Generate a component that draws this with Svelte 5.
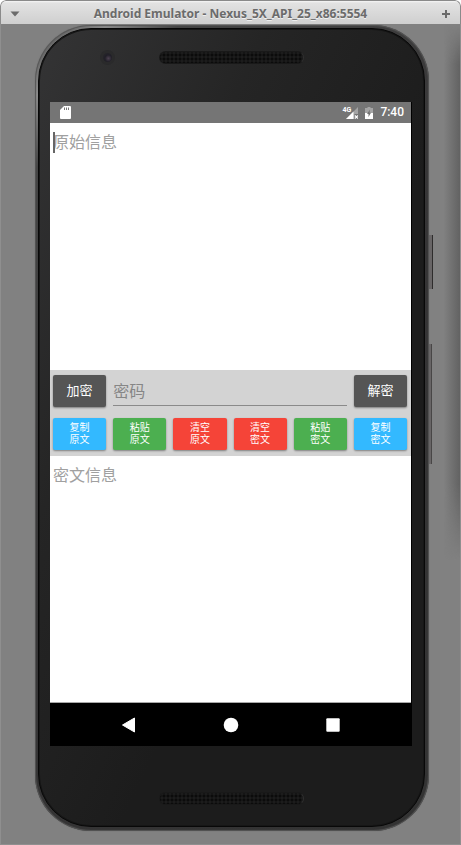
<script>
  let plain = $state('');
  let cipher = $state('');
  let password = $state('');

  const actions = [
    { verb: '复制', noun: '原文', tone: 'blue' },
    { verb: '粘贴', noun: '原文', tone: 'green' },
    { verb: '清空', noun: '原文', tone: 'red' },
    { verb: '清空', noun: '密文', tone: 'red' },
    { verb: '粘贴', noun: '密文', tone: 'green' },
    { verb: '复制', noun: '密文', tone: 'blue' }
  ];
</script>

<div class="window">
  <header class="titlebar">
    <button class="tool" aria-label="Window menu">
      <svg width="10" height="6" viewBox="0 0 10 6"><path d="M0.5 0.5h9L5 5.5z" fill="#6b6b6b" /></svg>
    </button>
    <h1>Android Emulator - Nexus_5X_API_25_x86:5554</h1>
    <button class="tool" aria-label="Maximize">
      <svg width="10" height="10" viewBox="0 0 10 10"><path d="M4 1h2v3h3v2H6v3H4V6H1V4h3z" fill="#6b6b6b" /></svg>
    </button>
  </header>

  <div class="stage">
    <div class="side power"></div>
    <div class="side volume"></div>
    <div class="phone">
      <div class="face">
        <div class="bezel top">
          <span class="camera"></span>
          <span class="speaker"></span>
        </div>

        <main class="screen">
          <div class="status">
            <svg class="sd" width="11" height="13" viewBox="0 0 11 13">
              <path d="M4 0h6q1 0 1 1v11q0 1-1 1H1q-1 0-1-1V4z" fill="#fff" />
              <path d="M4 1.5h1v2.5H4zM6 1.5h1v2.5H6zM8 1.5h1v2.5H8z" fill="#777" />
            </svg>
            <span class="signal">
              <span class="net">4G</span>
              <svg width="12" height="12" viewBox="0 0 12 12">
                <path d="M12 0v7H8.500v5H0z" fill="#a4a4a4" />
                <path d="M7.500 4.500V12H0z" fill="#fff" />
                <path d="M9 8.500l3 3M12 8.500l-3 3" stroke="#fff" stroke-width="1.200" />
              </svg>
            </span>
            <svg width="8" height="12" viewBox="0 0 8 12">
              <path d="M2.500 0h3v1H8v5H0V1h2.500z" fill="#a4a4a4" />
              <path d="M0 6h8v6H0z" fill="#fff" />
              <path d="M5 2.500L2 7h1.500v3L6 5.800H4.500z" fill="#707070" />
            </svg>
            <time>7:40</time>
          </div>

          <div class="app">
            <div class="note">
              <textarea aria-label="原始信息" placeholder="原始信息" bind:value={plain}></textarea>
              <span class="caret"></span>
            </div>

            <section class="panel">
              <button class="key dark">加密</button>
              <input type="text" aria-label="密码" placeholder="密码" bind:value={password} />
              <button class="key dark">解密</button>
              {#each actions as action}
                <button class="key small {action.tone}">{action.verb}<br />{action.noun}</button>
              {/each}
            </section>

            <div class="note">
              <textarea aria-label="密文信息" placeholder="密文信息" bind:value={cipher}></textarea>
            </div>
          </div>

          <nav class="navbar">
            <button aria-label="Back">
              <svg width="16" height="16" viewBox="0 0 16 16"><path d="M13.500 1v14L1.500 8z" fill="#fff" stroke="#fff" stroke-linejoin="round" /></svg>
            </button>
            <button aria-label="Home">
              <svg width="16" height="16" viewBox="0 0 16 16"><circle cx="8" cy="8" r="7.300" fill="#fff" /></svg>
            </button>
            <button aria-label="Overview">
              <svg width="16" height="16" viewBox="0 0 16 16"><rect x="1.300" y="1.300" width="13.400" height="13.400" rx="1" fill="#fff" /></svg>
            </button>
          </nav>
        </main>

        <div class="bezel bottom">
          <span class="speaker"></span>
        </div>
      </div>
    </div>
  </div>
</div>

<style>
  :global(body) {
    margin: 0;
    background: #fff;
  }

  * {
    box-sizing: border-box;
  }

  button {
    padding: 0;
    border: 0;
    background: none;
    font: inherit;
    cursor: pointer;
  }

  svg {
    display: block;
  }

  .window {
    display: flex;
    flex-direction: column;
    min-height: 100vh;
    border-radius: 6px 6px 0 0;
    overflow: hidden;
    font-family: Roboto, 'Noto Sans CJK SC', sans-serif;
  }

  .titlebar {
    display: flex;
    align-items: center;
    height: 24px;
    padding: 2px 9px 0;
    border: 1px solid #8a8a8a;
    border-bottom: 0;
    border-radius: 6px 6px 0 0;
    background: linear-gradient(#f6f6f6 0, #e2e2e2 2px, #cfcfcf 100%);
  }

  .titlebar h1 {
    flex: 1;
    margin: 0;
    font: bold 12px/20px 'Noto Sans', 'Open Sans', sans-serif;
    text-align: center;
    color: #6b6b6b;
    text-shadow: 0 1px 0 #f0f0f0;
  }

  .stage {
    position: relative;
    display: flex;
    flex: 1;
    padding: 1px 31px 13px 34px;
    border: 1px solid #8f8f8f;
    border-top: 0;
    background: #818181;
  }

  .stage::after {
    content: '';
    position: absolute;
    top: 0;
    right: 0;
    width: 16px;
    height: 536px;
    background: linear-gradient(90deg, #81818100, #626262);
    mask-image: linear-gradient(transparent, #000 40px, #000 460px, transparent);
  }

  .side {
    position: absolute;
    right: 27px;
    width: 4px;
    border-right: 1px solid #2e2c2c;
    background: #686566;
  }

  .power {
    top: 211px;
    height: 54px;
  }

  .volume {
    top: 320px;
    right: 28px;
    height: 120px;
    border-color: #484646;
  }

  .phone {
    position: relative;
    display: flex;
    flex: 1;
    padding: 3px 4px 4px 3px;
    border-radius: 56px;
    background: linear-gradient(135deg, #4a4a4a 0, #8c8c8c 6%, #444 12%, #353435 50%, #333 100%);
    box-shadow: inset 0 0 1px 1px #555, 0 0 1px #606060;
  }

  .face {
    display: flex;
    flex: 1;
    flex-direction: column;
    padding: 1px 12px 1px 11px;
    border: 1px solid #080808;
    border-radius: 53px;
    background: linear-gradient(115deg, #343435 0, #252525 30%, #1c1c1c 60%);
    box-shadow: inset 0 0 0 1px #161616;
  }

  .bezel {
    display: grid;
    grid-template-columns: 1fr 145px 1fr;
    align-items: center;
  }

  .top {
    height: 72px;
    padding-bottom: 17px;
  }

  .bottom {
    height: 79px;
    padding-top: 25px;
  }

  .camera {
    justify-self: center;
    width: 15px;
    height: 15px;
    margin-left: 6px;
    border: 3px solid #2a2a2b;
    border-radius: 50%;
    background: radial-gradient(circle at 60% 60%, #4c4150 0, #211f28 45%, #29292b 100%);
  }

  .speaker {
    grid-column: 2;
    height: 13px;
    border: 1px solid #191919;
    border-right-color: #303030;
    border-radius: 7px;
    background: radial-gradient(circle, #0b0b0b 1px, #1c1c1c 2px) 2px 1px / 4px 4px;
  }

  .screen {
    display: flex;
    flex: 1;
    flex-direction: column;
    border-right: 1px solid #000;
  }

  .status {
    display: flex;
    align-items: center;
    gap: 7px;
    height: 21px;
    padding: 0 7px 0 10px;
    background: #757575;
  }

  .sd {
    margin-right: auto;
  }

  .signal {
    display: flex;
    align-items: flex-end;
  }

  .net {
    align-self: flex-start;
    margin-right: -5px;
    font: bold 7px/7px Roboto, sans-serif;
    color: #fff;
  }

  time {
    font-size: 12px;
    font-weight: 500;
    line-height: 21px;
    color: #fff;
  }

  .app {
    display: flex;
    flex: 1;
    flex-direction: column;
    border-bottom: 1px solid #a8a8a8;
    background: #fff;
  }

  .note {
    position: relative;
    display: flex;
    flex: 1;
  }

  .caret {
    position: absolute;
    top: 9px;
    left: 3px;
    width: 2px;
    height: 21px;
    background: #666;
  }

  textarea {
    flex: 1;
    min-width: 0;
    padding: 8px 3px;
    border: 0;
    outline: 0;
    resize: none;
    background: none;
    font: 16px/24px Roboto, 'Noto Sans CJK SC', sans-serif;
    color: #222;
  }

  ::placeholder {
    color: #a0a0a0;
    opacity: 1;
  }

  .panel {
    display: grid;
    grid-template-columns: repeat(6, 1fr);
    gap: 11px 7px;
    padding: 5px 4px 6px 3px;
    background: #d3d3d3;
  }

  .panel input {
    grid-column: span 4;
    min-width: 0;
    height: 31px;
    padding: 3px 0 0;
    border: 0;
    border-bottom: 1px solid #8a8a8a;
    border-radius: 0;
    outline: 0;
    background: none;
    font: 16px/24px Roboto, 'Noto Sans CJK SC', sans-serif;
    color: #222;
  }

  .panel input::placeholder {
    color: #868686;
  }

  .key {
    height: 32px;
    padding-top: 1px;
    border-radius: 2px;
    box-shadow: 0 1px 2px #00000066;
    font-size: 13px;
    line-height: 20px;
    color: #fff;
  }

  .small {
    font-size: 10px;
    line-height: 12px;
  }

  .dark {
    background: #555;
  }

  .blue {
    background: #33b9ff;
  }

  .green {
    background: #4caf50;
  }

  .red {
    background: #f54438;
  }

  .navbar {
    display: flex;
    align-items: center;
    justify-content: center;
    gap: 86px;
    height: 43px;
    background: #000;
  }
</style>
